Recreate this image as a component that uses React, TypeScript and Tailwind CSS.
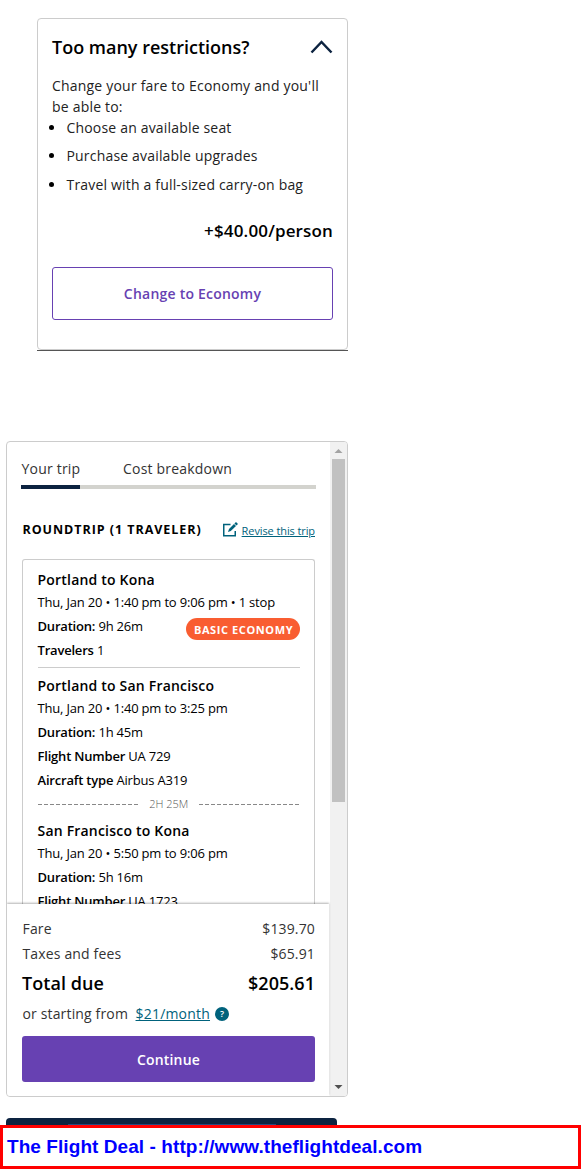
import type { ReactNode } from 'react';

interface Flight {
  route: string;
  time: string;
  details: { label: string; value: string }[];
}

const perks = [
  'Choose an available seat',
  'Purchase available upgrades',
  'Travel with a full-sized carry-on bag',
];

const flights: Flight[] = [
  {
    route: 'Portland to San Francisco',
    time: 'Thu, Jan 20 • 1:40 pm to 3:25 pm',
    details: [
      { label: 'Duration:', value: '1h 45m' },
      { label: 'Flight Number', value: 'UA 729' },
      { label: 'Aircraft type', value: 'Airbus A319' },
    ],
  },
  {
    route: 'San Francisco to Kona',
    time: 'Thu, Jan 20 • 5:50 pm to 9:06 pm',
    details: [
      { label: 'Duration:', value: '5h 16m' },
      { label: 'Flight Number', value: 'UA 1723' },
    ],
  },
];

const Detail = ({ label, value }: { label: string; value: string }) => (
  <p className="h-6 text-[13px] leading-6 tracking-[-0.18px] whitespace-nowrap">
    <span className="font-semibold tracking-[-0.2px]">{label}</span> {value}
  </p>
);

const Route = ({ children }: { children: ReactNode }) => (
  <h3 className="h-6 text-[14px] leading-6 font-semibold tracking-[0.2px] whitespace-nowrap">{children}</h3>
);

const FlightBlock = ({ flight }: { flight: Flight }) => (
  <div>
    <Route>{flight.route}</Route>
    <p className="h-[22px] text-[13px] leading-5 tracking-[-0.18px] whitespace-nowrap">{flight.time}</p>
    {flight.details.map((item) => (
      <Detail key={item.label} label={item.label} value={item.value} />
    ))}
  </div>
);

const Restrictions = () => (
  <section className="ml-[37px] h-[333px] w-[311px] border-b border-[#555]">
    <div className="h-[332px] rounded-[4px] border border-[#ccc] px-[14px] pt-[16px]">
      <div className="flex h-6 items-center justify-between">
        <h2 className="text-[18px] leading-6 font-semibold">Too many restrictions?</h2>
        <svg width="23" height="14" viewBox="0 0 23 14" fill="none" stroke="#0c2340" strokeWidth="2.5">
          <path d="M1.5 12.5 L11.5 2 L21.5 12.5" />
        </svg>
      </div>
      <p className="mt-[16px] text-[14px] leading-[21px] tracking-[0.2px] text-[#222]">
        Change your fare to Economy and you'll be able to:
      </p>
      <ul>
        {perks.map((perk) => (
          <li key={perk} className="flex h-[28.4px] text-[14px] leading-[21px] tracking-[0.18px] text-[#222]">
            <span className="mt-[8px] mr-[12.5px] -ml-[3px] h-[5px] w-[5px] rounded-full bg-black" />
            {perk}
          </li>
        ))}
      </ul>
      <p className="mt-[16.8px] text-right text-[17px] leading-6 font-semibold tracking-[0.15px]">+$40.00/person</p>
      <button className="mt-[24px] h-[53px] w-full rounded-[3px] border border-[#6741b2] text-[14px] font-semibold tracking-[0.22px] text-[#6741b2]">
        Change to Economy
      </button>
    </div>
  </section>
);

const Scrollbar = () => (
  <div className="flex w-[17px] shrink-0 flex-col items-center bg-[#f1f1f1]">
    <svg className="h-[17px] w-[17px] shrink-0" viewBox="0 0 17 17" fill="#a3a3a3">
      <path d="M4.5 11 L8.5 7 L12.5 11Z" />
    </svg>
    <div className="h-[343px] w-[13px] bg-[#c1c1c1]" />
    <svg className="mt-auto h-[17px] w-[17px] shrink-0" viewBox="0 0 17 17" fill="#505050">
      <path d="M4.5 6 L8.5 10 L12.5 6Z" />
    </svg>
  </div>
);

const Itinerary = () => (
  <div className="ml-[15px] h-[345px] w-[293px] overflow-hidden rounded-t-[3px] border border-b-0 border-[#ccc] pt-[8px] pr-[14px] pl-[14.5px]">
    <Route>Portland to Kona</Route>
    <p className="h-[22px] text-[13px] leading-[21px] tracking-[-0.18px] whitespace-nowrap">
      Thu, Jan 20 • 1:40 pm to 9:06 pm • 1 stop
    </p>
    <div className="flex justify-between">
      <div>
        <Detail label="Duration:" value="9h 26m" />
        <Detail label="Travelers" value="1" />
      </div>
      <span className="mt-[4px] h-[22px] w-[114px] rounded-full bg-[#f95d31] pl-px text-center text-[11px] leading-[23px] font-bold tracking-[0.6px] whitespace-nowrap text-white">
        BASIC ECONOMY
      </span>
    </div>
    <hr className="mt-[5px] mb-[6px] border-[#ccc]" />
    <FlightBlock flight={flights[0]} />
    <div className="flex h-[25px] items-center justify-between text-[11px]">
      <svg width="102" height="1">
        <path d="M0 .5H102" stroke="#888" strokeDasharray="4 2" />
      </svg>
      <span className="font-light text-[#555]">2H 25M</span>
      <svg width="102" height="1">
        <path d="M0 .5H102" stroke="#888" strokeDasharray="4 2" strokeDashoffset="-1" />
      </svg>
    </div>
    <div className="mt-[2px]">
      <FlightBlock flight={flights[1]} />
    </div>
  </div>
);

const Summary = () => (
  <div className="relative mr-px h-[192px] bg-white pt-[14px] pr-[14px] pl-[15px] text-[14px] tracking-[0.15px] text-[#333] shadow-[0_-1px_2px_rgba(0,0,0,0.3)]">
    <div className="flex h-[25px] justify-between pl-[0.5px] leading-[22px]">
      <span>Fare</span>
      <span>$139.70</span>
    </div>
    <div className="flex h-[25px] justify-between pl-[0.5px] leading-[22px]">
      <span>Taxes and fees</span>
      <span>$65.91</span>
    </div>
    <div className="flex h-[33px] justify-between text-[18px] leading-[30px] font-semibold tracking-[0.05px] text-black">
      <span>Total due</span>
      <span>$205.61</span>
    </div>
    <div className="flex h-6 items-center pl-[0.5px]">
      <span>or starting from</span>
      <a href="#" className="ml-[7.5px] tracking-[0.2px] text-[#00627c] underline">$21/month</a>
      <span className="mt-[1px] ml-[5px] h-[14px] w-[14px] rounded-full bg-[#00627c] text-center text-[9px] leading-[14px] font-semibold tracking-normal text-white">
        ?
      </span>
    </div>
    <button className="mt-[11px] h-[46px] w-full rounded-[3px] bg-[#6741b2] text-[14px] font-semibold text-white">
      Continue
    </button>
  </div>
);

const Trip = () => (
  <section className="mt-[90px] ml-[6px] flex h-[656px] w-[342px] overflow-hidden rounded-[4px] border border-[#ccc]">
    <div className="w-[323px]">
      <div className="mt-[15px] ml-[14px] flex h-[32px] w-[295px] border-b-4 border-[#d3d3ce] text-[14px] leading-6 tracking-[0.2px] text-[#333]">
        <span className="h-[32px] w-[59px] border-b-4 border-[#0c2340] pl-[0.5px] whitespace-nowrap">Your trip</span>
        <span className="ml-[43px]">Cost breakdown</span>
      </div>
      <div className="mt-[30px] ml-[15px] flex h-[40px] w-[293px] justify-between">
        <h2 className="pl-[0.5px] text-[12.5px] leading-[21px] font-bold tracking-[0.95px]">ROUNDTRIP (1 TRAVELER)</h2>
        <a href="#" className="flex h-[24px] text-[11px] leading-6 tracking-[-0.1px] text-[#00627c]">
          <svg className="mt-[3px] mr-[4px]" width="15" height="15" viewBox="0 0 15 15" fill="none" stroke="#00627c" strokeWidth="1.5">
            <path d="M7.5 2.5H.75V13.75H12.25V9" />
            <path d="M5 10 L6 7 L11 2 L13 4 L7.8 9Z" fill="#00627c" stroke="none" />
            <path d="M12.2 .8 L14.2 2.8" strokeWidth="2.2" />
          </svg>
          <span className="underline">Revise this trip</span>
        </a>
      </div>
      <Itinerary />
      <Summary />
    </div>
    <Scrollbar />
  </section>
);

export default function App() {
  return (
    <main className="h-[1169px] w-[581px] overflow-hidden bg-white pt-[18px] font-['Open_Sans',sans-serif] text-black">
      <Restrictions />
      <Trip />
      {/* top edge of the next panel */}
      <div className="mt-[21px] ml-[6px] flex h-[7px] w-[331px] items-end justify-center rounded-t-[4px] bg-[#0c2340]">
        <div className="h-[1px] w-[208px] bg-[#23487f]" />
      </div>
      <footer className="h-[44px] border-[3px] border-[#f00] pl-[4px] font-['Liberation_Sans',sans-serif] text-[19px] leading-[38px] font-bold tracking-[0.07px] text-[#00f]">
        The Flight Deal - http://www.theflightdeal.com
      </footer>
    </main>
  );
}
